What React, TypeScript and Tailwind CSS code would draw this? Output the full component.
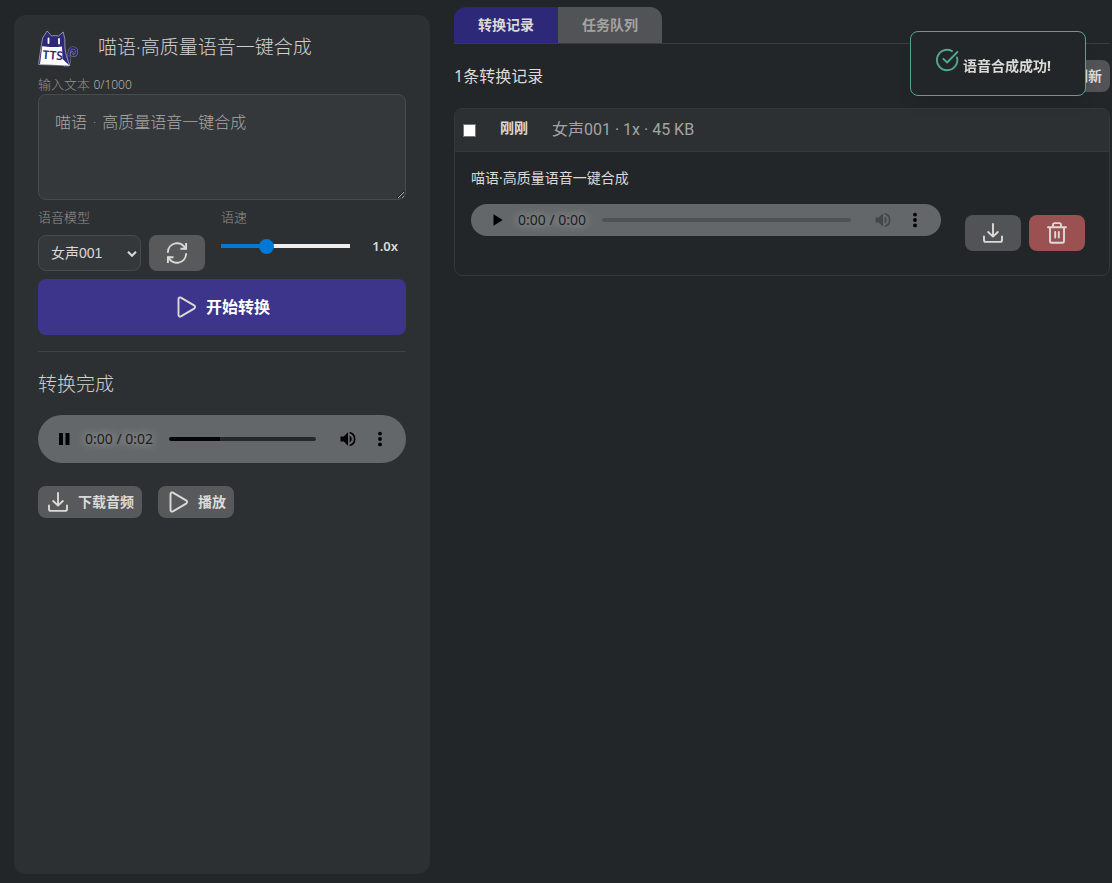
import { useState, type ReactNode } from "react";

function Icon({ children, className = "size-6" }: { children: ReactNode; className?: string }) {
  return (
    <svg
      viewBox="0 0 24 24"
      fill="none"
      stroke="currentColor"
      strokeWidth="1.9"
      strokeLinecap="round"
      strokeLinejoin="round"
      className={`${className} shrink-0`}
      aria-hidden="true"
    >
      {children}
    </svg>
  );
}

const PlayIcon = () => (
  <Icon>
    <path d="M4.500 4v16c0 1.300 1.300 2 2.400 1.400l13.200-7.800c1.300-.8 1.300-2.400 0-3.200L6.900 2.600C5.800 2 4.500 2.700 4.500 4Z" />
  </Icon>
);

const DownloadIcon = () => (
  <Icon>
    <path d="M3 15.500V19c0 1.100.8 1.900 1.900 1.900h14.200c1.100 0 1.900-.8 1.900-1.900v-3.500" />
    <path d="M12 3v12.500M7.200 11l4.800 4.600 4.800-4.600" />
  </Icon>
);

const RefreshIcon = () => (
  <Icon>
    <path d="M2.900 11A9.200 9.200 0 0 1 20.400 7.500M21.100 13A9.200 9.200 0 0 1 3.600 16.500" />
    <path d="M21.100 3v4.700h-4.700M2.900 21v-4.700h4.700" strokeLinecap="square" strokeLinejoin="miter" />
  </Icon>
);

const TrashIcon = () => (
  <Icon>
    <path d="M3 6.200h18M5 6.200v13.900c0 .9.700 1.600 1.600 1.600h10.800c.9 0 1.600-.7 1.600-1.600V6.200" />
    <path d="M8 5.800V3.700c0-.9.700-1.600 1.600-1.600h4.800c.9 0 1.600.7 1.600 1.600v2.100M10.200 11v5.500M13.800 11v5.500" />
  </Icon>
);

const CheckIcon = () => (
  <Icon>
    <path d="M22 9.500A10.200 10.200 0 1 1 17 3.100" />
    <path d="M8.400 10.800l3.700 3.700L22.400 4" />
  </Icon>
);

const tail = "M27 36.500c4 1.500 4.400-3 4-7.500-.6-6 .6-10.500 4.200-10.200 4.600.5 4.400 7.400.4 7.800-2 .2-2.800-1.800-1.400-3";

function CatLogo() {
  return (
    <svg viewBox="0 -2 40 40" className="size-10 shrink-0" role="img" aria-label="TTS">
      <path d={tail} fill="none" stroke="#8f90a8" strokeWidth="2.800" strokeLinecap="round" />
      <path d={tail} fill="none" stroke="#2d2877" strokeWidth="1.900" strokeLinecap="round" />
      <path
        d="M4.600 9 9.200 2l4.400 5c2.300-.6 5-.5 6.800.1L25.200 3l1.700 7.500C26.400 19 27.500 27 32 36.500L.600 35.500C1.200 30 3.200 17 4.600 9Z"
        fill="#2d2877"
        stroke="#a9aaba"
        strokeWidth="0.8"
      />
      <path d="M4.200 17.200c6 .9 14 .9 19.800.2L24.500 30l7 6.500-29.500-1.200Z" fill="#fff" />
      <path d="M10.500 9.500v4.500M21 10v4.500" stroke="#fff" strokeWidth="1.800" strokeLinecap="round" />
      <text
        x="4.500"
        y="30.500"
        fontSize="12"
        fontWeight="600"
        fontFamily="Noto Sans, sans-serif"
        fill="#2d2877"
        transform="rotate(4 14 26)"
      >
        TTS
      </text>
    </svg>
  );
}

type PlayerProps = {
  playing?: boolean;
  time: string;
  progress: number;
  muted?: boolean;
  label: string;
  tall?: boolean;
};

function Player({ playing = false, time, progress, muted = false, label, tall = false }: PlayerProps) {
  const rest = muted ? "#4f5254" : "#26282a";
  return (
    <div
      role="group"
      aria-label={label}
      className={`flex min-w-0 flex-1 items-center rounded-full bg-[#646769] pr-[14px] pl-4 text-black ${tall ? "h-12" : "h-8"}`}
    >
      <button type="button" aria-label={playing ? "暂停" : "播放"} className="grid size-5 shrink-0 place-items-center">
        <svg viewBox="0 0 20 20" className="size-5" fill="currentColor" aria-hidden="true">
          {playing ? <path d="M5 4h4v12H5zM11.500 4h4v12h-4z" /> : <path d="M6.500 4.200v11.600l9.200-5.800z" />}
        </svg>
      </button>
      <span className="ml-[11px] shrink-0 text-sm text-[#1c1d1e] [text-shadow:0_0_10px_#a9acae,0_0_8px_#919496]">
        {time}
      </span>
      <input
        type="range"
        aria-label="播放进度"
        min={0}
        max={100}
        defaultValue={progress}
        className="mx-4 h-1 min-w-0 flex-1 appearance-none rounded-full [&::-webkit-slider-thumb]:size-1 [&::-webkit-slider-thumb]:appearance-none"
        style={{ background: `linear-gradient(to right, #060606 ${progress}%, ${rest} ${progress}%)` }}
      />
      <button
        type="button"
        aria-label="音量"
        disabled={muted}
        className={`ml-1 grid size-6 shrink-0 place-items-center ${muted ? "text-[#444749]" : "text-black"}`}
      >
        <svg viewBox="0 0 24 24" className="size-5" fill="currentColor" aria-hidden="true">
          <path d="M3 9v6h4l5 5V4L7 9H3zm13.500 3A4.500 4.500 0 0 0 14 7.970v8.050A4.480 4.480 0 0 0 16.500 12zM14 3.230v2.060a7 7 0 0 1 0 13.420v2.060a9 9 0 0 0 0-17.540z" />
        </svg>
      </button>
      <button type="button" aria-label="更多选项" className="ml-2 grid size-6 shrink-0 place-items-center">
        <svg viewBox="0 0 24 24" className="size-5" fill="currentColor" aria-hidden="true">
          <circle cx="12" cy="5.500" r="2.300" />
          <circle cx="12" cy="12" r="2.300" />
          <circle cx="12" cy="18.500" r="2.300" />
        </svg>
      </button>
    </div>
  );
}

export default function App() {
  const [speed, setSpeed] = useState(1);
  const fill = ((speed - 0.5) / 1.5) * 100;

  return (
    <div className="grid min-h-screen grid-cols-[416fr_656fr] gap-6 bg-[#232629] pr-[2px] pl-[14px] font-['Noto_Sans','Noto_Sans_CJK_SC',sans-serif] text-[#dcdad7]">
      <aside className="mt-[15px] mb-[9px] flex flex-col rounded-xl bg-[#2d3032] px-6 pt-3">
        <header className="flex h-10 items-center gap-5">
          <CatLogo />
          <h1 className="text-[19px] leading-7 font-light text-[#d2d0ce]">喵语·高质量语音一键合成</h1>
        </header>

        <label htmlFor="source" className="mt-[7px] text-[13px] leading-5 font-light text-[#94928f]">
          输入文本 <span className="text-xs text-[#b5b3b0]">0/1000</span>
        </label>
        <textarea
          id="source"
          placeholder="喵语 · 高质量语音一键合成"
          className="h-[106px] w-full rounded-lg border border-[#484b4d] bg-[#35383a] p-4 font-['DejaVu_Sans','Noto_Sans_CJK_SC',sans-serif] text-base font-light placeholder:text-[#a9a8a6]"
        />

        <div className="mt-[7px] grid grid-cols-[19fr_21fr] gap-x-4 text-[13px] leading-5 font-light">
          <div>
            <label htmlFor="voice" className="block text-[#94928f]">
              语音模型
            </label>
            <div className="mt-2 flex gap-2">
              <div className="relative min-w-0 flex-1">
                <select
                  id="voice"
                  className="h-9 w-full appearance-none rounded-lg border border-[#484b4d] bg-[#35383a] pl-3 font-['Liberation_Sans','Noto_Sans_CJK_SC',sans-serif] text-sm font-normal"
                >
                  <option>女声001</option>
                </select>
                <svg
                  viewBox="0 0 10 6"
                  className="pointer-events-none absolute top-4 right-1 h-[6px] w-[10px]"
                  fill="none"
                  stroke="currentColor"
                  strokeWidth="2"
                  aria-hidden="true"
                >
                  <path d="m1 .8 4 4 4-4" />
                </svg>
              </div>
              <button type="button" aria-label="刷新模型" className="grid h-9 w-14 place-items-center rounded-lg bg-[#58595b]">
                <RefreshIcon />
              </button>
            </div>
          </div>
          <div>
            <label htmlFor="speed" className="block text-[#94928f]">
              语速
            </label>
            <div className="flex h-[38px] items-center">
              <input
                id="speed"
                type="range"
                min={0.5}
                max={2}
                step={0.1}
                value={speed}
                onChange={(e) => setSpeed(Number(e.target.value))}
                className="h-1 min-w-0 flex-1 appearance-none [&::-webkit-slider-thumb]:size-[15px] [&::-webkit-slider-thumb]:appearance-none [&::-webkit-slider-thumb]:rounded-full [&::-webkit-slider-thumb]:bg-[#0078d7]"
                style={{ background: `linear-gradient(to right, #0078d7 ${fill}%, #efeeec ${fill}%)` }}
              />
              <output htmlFor="speed" className="w-14 pr-2 text-right text-[13px] font-semibold">
                {speed.toFixed(1)}x
              </output>
            </div>
          </div>
        </div>

        <button
          type="button"
          className="mt-2 flex h-14 items-center justify-center gap-2 rounded-lg bg-[#3d348b] text-base font-bold text-white"
        >
          <span className="text-[#dcdad7]">
            <PlayIcon />
          </span>
          开始转换
        </button>

        <section className="mt-4 border-t border-[#414446] pt-[18px]">
          <h2 className="text-[19px] leading-7 font-light text-[#d2d0ce]">转换完成</h2>
          <div className="mt-[17px] flex">
            <Player playing tall time="0:00 / 0:02" progress={35} label="转换结果" />
          </div>
          <div className="mt-[23px] flex gap-4 text-sm font-bold">
            <button type="button" className="flex h-8 items-center gap-2 rounded-lg bg-[#58595b] px-2">
              <DownloadIcon />
              下载音频
            </button>
            <button type="button" className="flex h-8 items-center gap-2 rounded-lg bg-[#58595b] px-2">
              <PlayIcon />
              播放
            </button>
          </div>
        </section>
      </aside>

      <main className="min-w-0 pt-[7px]">
        <div role="tablist" className="flex border-b border-[#3a3d3f] text-sm font-bold">
          <button type="button" role="tab" aria-selected="true" className="h-9 rounded-tl-xl bg-[#2d2877] px-6">
            转换记录
          </button>
          <button type="button" role="tab" aria-selected="false" className="h-9 rounded-tr-xl bg-[#525356] px-6 text-[#a5a3a2]">
            任务队列
          </button>
        </div>

        <div className="mt-4 flex h-8 items-center justify-between">
          <p className="text-base">1条转换记录</p>
          <button type="button" className="h-8 rounded-lg bg-[#525356] px-2 text-sm font-bold">
            刷新
          </button>
        </div>

        <article className="mt-4 overflow-hidden rounded-lg border border-[#35383a]">
          <header className="flex h-[42px] items-center bg-[#2d3032] pl-2">
            <input
              type="checkbox"
              aria-label="选择记录"
              className="size-[13px] appearance-none border border-[#767676] bg-white checked:bg-[#0078d7]"
            />
            <time className="ml-6 pb-1 text-sm font-bold">刚刚</time>
            <span className="ml-6 font-['Roboto','Noto_Sans_CJK_SC',sans-serif] text-base text-[#a5a3a2]">
              女声001 · 1x · 45 KB
            </span>
          </header>
          <div className="border-t border-[#35383a] px-4 pt-4 pb-6">
            <p className="text-sm">喵语·高质量语音一键合成</p>
            <div className="mt-4 flex items-start pr-2">
              <Player muted time="0:00 / 0:00" progress={0} label="女声001 录音" />
              <div className="mt-[11px] ml-6 flex gap-2">
                <button type="button" aria-label="下载" className="grid h-9 w-14 place-items-center rounded-lg bg-[#525356]">
                  <DownloadIcon />
                </button>
                <button type="button" aria-label="删除" className="grid h-9 w-14 place-items-center rounded-lg bg-[#9b5151]">
                  <TrashIcon />
                </button>
              </div>
            </div>
          </div>
        </article>
      </main>

      <div
        role="status"
        className="fixed top-[31px] right-[26px] flex h-[65px] w-44 gap-1 rounded-lg border border-[#50a88a] bg-[#232629] pt-4 pl-6 shadow-lg"
      >
        <span className="text-[#50a88a]">
          <CheckIcon />
        </span>
        <p className="pt-2 text-sm font-bold">语音合成成功!</p>
      </div>
    </div>
  );
}
